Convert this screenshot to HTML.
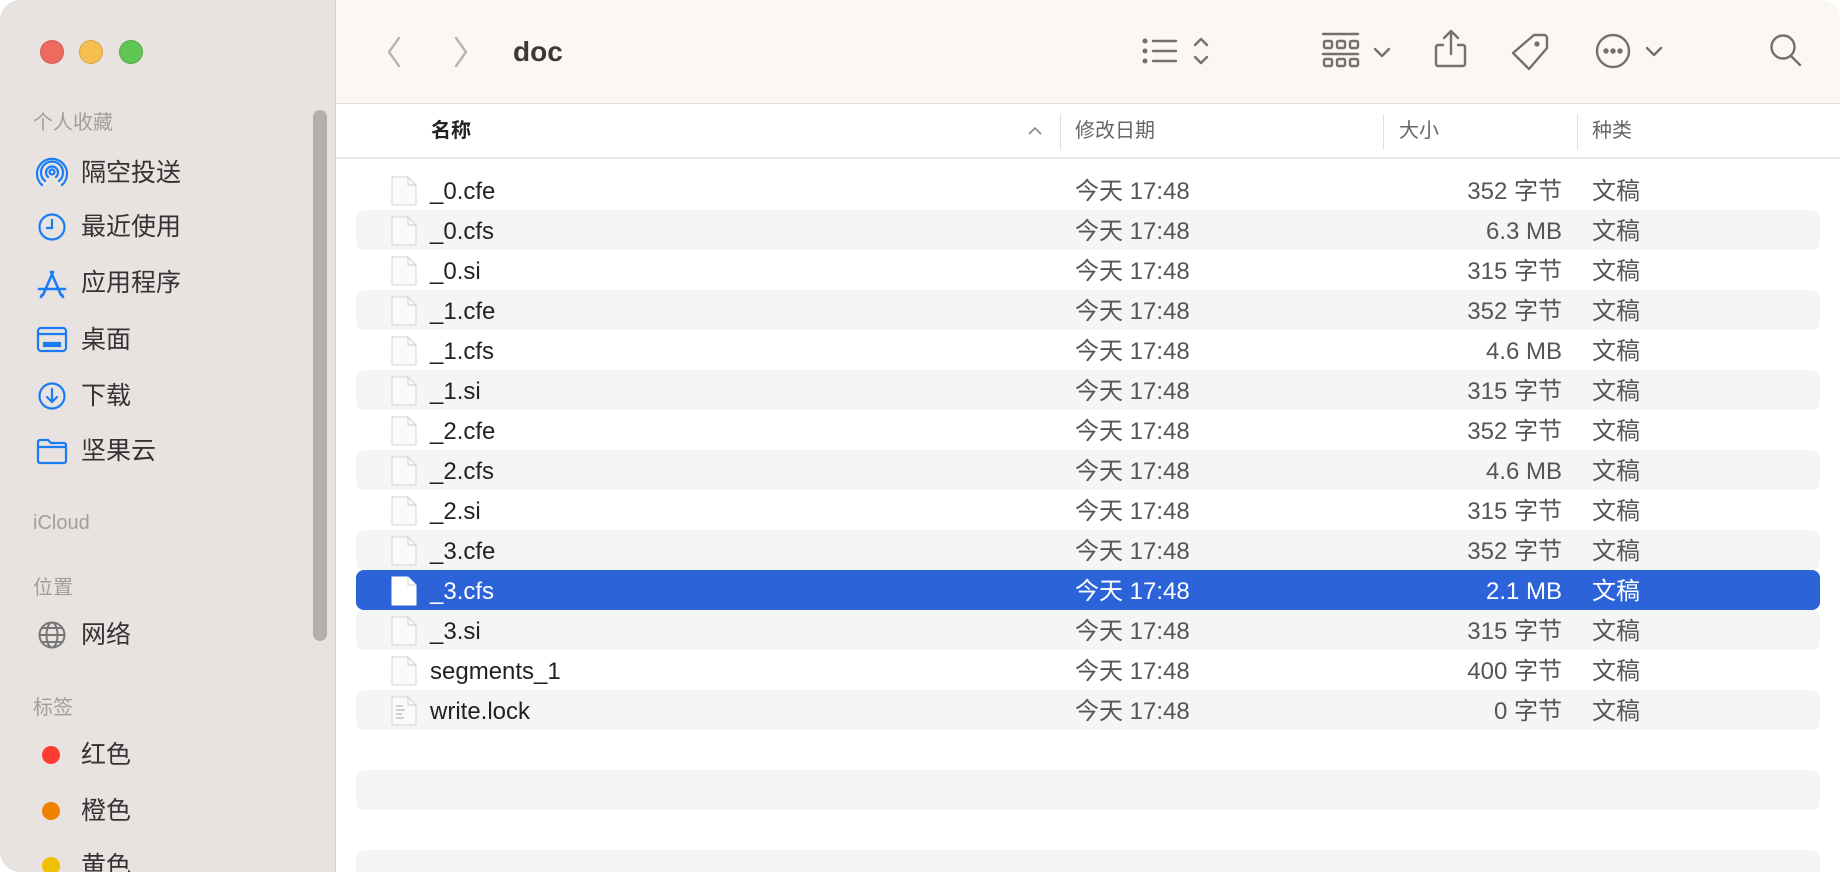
<!DOCTYPE html>
<html><head><meta charset="utf-8"><style>
*{margin:0;padding:0;box-sizing:border-box}
body{width:1840px;height:872px;background:#fff;font-family:"Liberation Sans","Noto Sans CJK SC",sans-serif;position:relative;overflow:hidden}
.win{position:absolute;left:0;top:0;width:1840px;height:872px;border-radius:20px;overflow:hidden;background:#fff}
.side{position:absolute;left:0;top:0;width:336px;height:872px;background:#e8e3e0;border-right:1px solid #d8d3cf}
.tl{position:absolute;top:40px;width:24px;height:24px;border-radius:50%}
.sec{position:absolute;left:33px;font-size:20px;color:#a29e9b;line-height:24px}
.it{position:absolute;left:81px;font-size:25px;color:#333;line-height:30px}
.ic{position:absolute;left:36px}
.dot{position:absolute;left:42px;width:18px;height:18px;border-radius:50%}
.scroll{position:absolute;left:313px;top:110px;width:14px;height:531px;border-radius:7px;background:#b4b0ad}
.tb{position:absolute;left:336px;top:0;width:1504px;height:104px;background:#fbf7f3;border-bottom:1px solid #e2dedb}
.hdr{position:absolute;left:336px;top:104px;width:1504px;height:55px;border-bottom:2px solid #e6e6e6;background:#fff}
.h{position:absolute;top:14px;font-size:20px;color:#666;line-height:26px}
.sep{position:absolute;top:10px;width:1px;height:36px;background:#e0e0e0}
.row{position:absolute;left:356px;width:1464px;height:40px;border-radius:8px}
.g{background:#f4f5f4}
.sel{background:#2c63d9}
.row span{position:absolute;top:7px;font-size:24px;line-height:30px;color:#555;white-space:nowrap}
.row .n{left:74px;color:#222}
.row .d{left:719px}
.row .s{right:258px;text-align:right}
.row .k{left:1236px}
.sel span,.sel .n{color:#fff}
.fi{position:absolute;left:35px;top:6px;width:26px;height:30px}
</style></head><body><div class="win">
<div class="side">
<div class="tl" style="left:40px;background:#ee6a5f;border:1px solid #d85a50"></div>
<div class="tl" style="left:79px;background:#f5be4f;border:1px solid #dea73f"></div>
<div class="tl" style="left:119px;background:#61c554;border:1px solid #52ad45"></div>
<div class="sec" style="top:111px">个人收藏</div>
<svg class="ic" style="top:157px" width="32" height="32" viewBox="0 0 32 32" fill="none" stroke="#1a7cf5" stroke-width="2.2" stroke-linecap="round"><circle cx="16" cy="15" r="2.5"/><path d="M12 20a6 6 0 1 1 8 0M9 24a11 11 0 1 1 14 0M6 28a15 15 0 1 1 20 0"/></svg>
<div class="it" style="top:158px">隔空投送</div>
<svg class="ic" style="top:211px" width="32" height="32" viewBox="0 0 32 32" fill="none" stroke="#1a7cf5" stroke-width="2.2"><circle cx="16" cy="16" r="12.5"/><path d="M16 8v9h-6"/></svg>
<div class="it" style="top:212px">最近使用</div>
<svg class="ic" style="top:268px" width="32" height="32" viewBox="0 0 32 32" fill="none" stroke="#1a7cf5" stroke-width="2.6" stroke-linecap="round"><path d="M17 4L7 27M15 4l10 23M3 21h26M6 27l-1 2M26 27l1 2"/></svg>
<div class="it" style="top:268px">应用程序</div>
<svg class="ic" style="top:324px" width="32" height="32" viewBox="0 0 32 32" fill="none" stroke="#1a7cf5" stroke-width="2.2"><rect x="2" y="4" width="28" height="23" rx="3"/><path d="M2 10h28"/><rect x="8" y="19" width="16" height="3" fill="#1a7cf5"/></svg>
<div class="it" style="top:325px">桌面</div>
<svg class="ic" style="top:380px" width="32" height="32" viewBox="0 0 32 32" fill="none" stroke="#1a7cf5" stroke-width="2.2" stroke-linecap="round"><circle cx="16" cy="16" r="12.5"/><path d="M16 9v13M11 17l5 5 5-5"/></svg>
<div class="it" style="top:381px">下载</div>
<svg class="ic" style="top:435px" width="32" height="32" viewBox="0 0 32 32" fill="none" stroke="#1a7cf5" stroke-width="2.2"><path d="M2 7a2 2 0 0 1 2-2h8l3 3h13a2 2 0 0 1 2 2v16a2 2 0 0 1-2 2H4a2 2 0 0 1-2-2z"/><path d="M2 12h28"/></svg>
<div class="it" style="top:436px">坚果云</div>
<div class="sec" style="top:511px">iCloud</div>
<div class="sec" style="top:576px">位置</div>
<svg class="ic" style="top:619px" width="32" height="32" viewBox="0 0 32 32" fill="none" stroke="#777" stroke-width="2"><circle cx="16" cy="16" r="12.5"/><ellipse cx="16" cy="16" rx="5.5" ry="12.5"/><path d="M3.5 16h25M6 9h20M6 23h20"/></svg>
<div class="it" style="top:620px">网络</div>
<div class="sec" style="top:696px">标签</div>
<div class="dot" style="top:746px;background:#fc3c30"></div><div class="it" style="top:740px">红色</div>
<div class="dot" style="top:802px;background:#ef8200"></div><div class="it" style="top:796px">橙色</div>
<div class="dot" style="top:857px;background:#f0c000"></div><div class="it" style="top:851px">黄色</div>
<div class="scroll"></div>
</div>
<div class="tb">
<div style="position:absolute;left:177px;top:36px;font-size:28px;font-weight:bold;color:#3c3836">doc</div>
</div>
<svg style="position:absolute;left:0;top:0" width="1840" height="104" fill="none" stroke="#75706d" stroke-width="2.4" stroke-linecap="round" stroke-linejoin="round">
<path d="M399 38l-10 14 10 14M456 38l10 14-10 14" stroke="#bbb5b1"/>
<circle cx="1145" cy="41" r="1.3" fill="#75706d"/><circle cx="1145" cy="51" r="1.3" fill="#75706d"/><circle cx="1145" cy="61" r="1.3" fill="#75706d"/>
<path d="M1153 41h23M1153 51h23M1153 61h23"/>
<path d="M1195 45l6-6 6 6M1195 57l6 6 6-6"/>
<path d="M1323 34h35M1323 54h35"/>
<rect x="1324" y="41" width="8" height="7" rx="1.5"/><rect x="1337" y="41" width="8" height="7" rx="1.5"/><rect x="1350" y="41" width="8" height="7" rx="1.5"/>
<rect x="1324" y="59" width="8" height="7" rx="1.5"/><rect x="1337" y="59" width="8" height="7" rx="1.5"/><rect x="1350" y="59" width="8" height="7" rx="1.5"/>
<path d="M1375 49l7 7 7-7"/>
<path d="M1443 45h-5a2 2 0 0 0-2 2v17a2 2 0 0 0 2 2h25a2 2 0 0 0 2-2V47a2 2 0 0 0-2-2h-5M1451 54V32M1444 38l7-7 7 7"/>
<path d="M1534 35h10a3 3 0 0 1 3 3v10l-18 21-16-16z"/><circle cx="1537" cy="44" r="1.4" fill="#75706d"/>
<circle cx="1613" cy="51" r="16"/>
<circle cx="1606" cy="51" r="1.5" fill="#75706d"/><circle cx="1613" cy="51" r="1.5" fill="#75706d"/><circle cx="1620" cy="51" r="1.5" fill="#75706d"/>
<path d="M1647 48l7 7 7-7"/>
<circle cx="1783" cy="47" r="11.5"/><path d="M1791 56l9 9"/>
</svg>
<div class="hdr">
<div class="h" style="left:95px;color:#222;font-weight:bold">名称</div>
<svg style="position:absolute;left:692px;top:22px" width="14" height="10" fill="none" stroke="#888" stroke-width="1.6"><path d="M1 8l6-6 6 6"/></svg>
<div class="sep" style="left:724px"></div>
<div class="h" style="left:739px">修改日期</div>
<div class="sep" style="left:1047px"></div>
<div class="h" style="left:1063px">大小</div>
<div class="sep" style="left:1241px"></div>
<div class="h" style="left:1256px">种类</div>
</div>

<div class="row" style="top:170px"><svg class="fi" viewBox="0 0 26 30"><path d="M1 1h16l8 8v20H1z" fill="#fafafa" stroke="#d6d6d6"/><path d="M17 1v8h8" fill="none" stroke="#ccc"/></svg><span class="n">_0.cfe</span><span class="d">今天 17:48</span><span class="s">352 字节</span><span class="k">文稿</span></div>
<div class="row g" style="top:210px"><svg class="fi" viewBox="0 0 26 30"><path d="M1 1h16l8 8v20H1z" fill="#fafafa" stroke="#d6d6d6"/><path d="M17 1v8h8" fill="none" stroke="#ccc"/></svg><span class="n">_0.cfs</span><span class="d">今天 17:48</span><span class="s">6.3 MB</span><span class="k">文稿</span></div>
<div class="row" style="top:250px"><svg class="fi" viewBox="0 0 26 30"><path d="M1 1h16l8 8v20H1z" fill="#fafafa" stroke="#d6d6d6"/><path d="M17 1v8h8" fill="none" stroke="#ccc"/></svg><span class="n">_0.si</span><span class="d">今天 17:48</span><span class="s">315 字节</span><span class="k">文稿</span></div>
<div class="row g" style="top:290px"><svg class="fi" viewBox="0 0 26 30"><path d="M1 1h16l8 8v20H1z" fill="#fafafa" stroke="#d6d6d6"/><path d="M17 1v8h8" fill="none" stroke="#ccc"/></svg><span class="n">_1.cfe</span><span class="d">今天 17:48</span><span class="s">352 字节</span><span class="k">文稿</span></div>
<div class="row" style="top:330px"><svg class="fi" viewBox="0 0 26 30"><path d="M1 1h16l8 8v20H1z" fill="#fafafa" stroke="#d6d6d6"/><path d="M17 1v8h8" fill="none" stroke="#ccc"/></svg><span class="n">_1.cfs</span><span class="d">今天 17:48</span><span class="s">4.6 MB</span><span class="k">文稿</span></div>
<div class="row g" style="top:370px"><svg class="fi" viewBox="0 0 26 30"><path d="M1 1h16l8 8v20H1z" fill="#fafafa" stroke="#d6d6d6"/><path d="M17 1v8h8" fill="none" stroke="#ccc"/></svg><span class="n">_1.si</span><span class="d">今天 17:48</span><span class="s">315 字节</span><span class="k">文稿</span></div>
<div class="row" style="top:410px"><svg class="fi" viewBox="0 0 26 30"><path d="M1 1h16l8 8v20H1z" fill="#fafafa" stroke="#d6d6d6"/><path d="M17 1v8h8" fill="none" stroke="#ccc"/></svg><span class="n">_2.cfe</span><span class="d">今天 17:48</span><span class="s">352 字节</span><span class="k">文稿</span></div>
<div class="row g" style="top:450px"><svg class="fi" viewBox="0 0 26 30"><path d="M1 1h16l8 8v20H1z" fill="#fafafa" stroke="#d6d6d6"/><path d="M17 1v8h8" fill="none" stroke="#ccc"/></svg><span class="n">_2.cfs</span><span class="d">今天 17:48</span><span class="s">4.6 MB</span><span class="k">文稿</span></div>
<div class="row" style="top:490px"><svg class="fi" viewBox="0 0 26 30"><path d="M1 1h16l8 8v20H1z" fill="#fafafa" stroke="#d6d6d6"/><path d="M17 1v8h8" fill="none" stroke="#ccc"/></svg><span class="n">_2.si</span><span class="d">今天 17:48</span><span class="s">315 字节</span><span class="k">文稿</span></div>
<div class="row g" style="top:530px"><svg class="fi" viewBox="0 0 26 30"><path d="M1 1h16l8 8v20H1z" fill="#fafafa" stroke="#d6d6d6"/><path d="M17 1v8h8" fill="none" stroke="#ccc"/></svg><span class="n">_3.cfe</span><span class="d">今天 17:48</span><span class="s">352 字节</span><span class="k">文稿</span></div>
<div class="row sel" style="top:570px"><svg class="fi" viewBox="0 0 26 30"><path d="M1 1h16l8 8v20H1z" fill="#fff" stroke="#fff"/><path d="M17 1v8h8" fill="none" stroke="#ccc"/></svg><span class="n">_3.cfs</span><span class="d">今天 17:48</span><span class="s">2.1 MB</span><span class="k">文稿</span></div>
<div class="row g" style="top:610px"><svg class="fi" viewBox="0 0 26 30"><path d="M1 1h16l8 8v20H1z" fill="#fafafa" stroke="#d6d6d6"/><path d="M17 1v8h8" fill="none" stroke="#ccc"/></svg><span class="n">_3.si</span><span class="d">今天 17:48</span><span class="s">315 字节</span><span class="k">文稿</span></div>
<div class="row" style="top:650px"><svg class="fi" viewBox="0 0 26 30"><path d="M1 1h16l8 8v20H1z" fill="#fafafa" stroke="#d6d6d6"/><path d="M17 1v8h8" fill="none" stroke="#ccc"/></svg><span class="n">segments_1</span><span class="d">今天 17:48</span><span class="s">400 字节</span><span class="k">文稿</span></div>
<div class="row g" style="top:690px"><svg class="fi" viewBox="0 0 26 30"><path d="M1 1h16l8 8v20H1z" fill="#fafafa" stroke="#d6d6d6"/><path d="M17 1v8h8" fill="none" stroke="#ccc"/><path d="M5 10h7M5 14h9M5 18h6M5 22h8" stroke="#aaa"/></svg><span class="n">write.lock</span><span class="d">今天 17:48</span><span class="s">0 字节</span><span class="k">文稿</span></div>
<div class="row g" style="top:770px"></div>
<div class="row g" style="top:850px"></div>
</div></body></html>
